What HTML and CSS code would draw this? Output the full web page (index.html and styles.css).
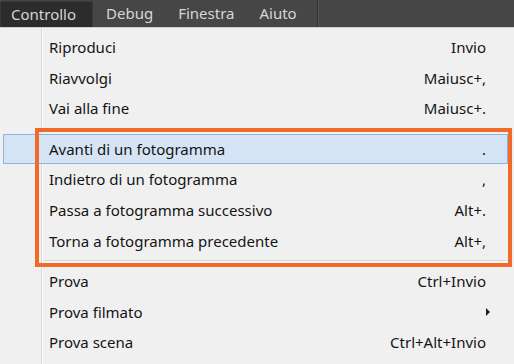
FILE: index.html
```html
<!DOCTYPE html>
<html>
<head>
    <meta charset="UTF-8">
    <title>Controllo</title>
    <link rel="stylesheet" href="styles.css">
</head>
<body>
    <div class="menubar">
        <div class="menubar-item active">Controllo</div>
        <div class="menubar-item">Debug</div>
        <div class="menubar-item">Finestra</div>
        <div class="menubar-item">Aiuto</div>
        <div class="menubar-divider"></div>
    </div>
    <div class="menu">
        <div class="menu-item"><span class="label">Riproduci</span><span class="shortcut">Invio</span></div>
        <div class="menu-item"><span class="label">Riavvolgi</span><span class="shortcut">Maiusc+,</span></div>
        <div class="menu-item"><span class="label">Vai alla fine</span><span class="shortcut">Maiusc+.</span></div>
        <div class="annotated">
            <div class="separator"></div>
            <div class="menu-item hover"><span class="label">Avanti di un fotogramma</span><span class="shortcut">.</span></div>
            <div class="menu-item"><span class="label">Indietro di un fotogramma</span><span class="shortcut">,</span></div>
            <div class="menu-item"><span class="label">Passa a fotogramma successivo</span><span class="shortcut">Alt+.</span></div>
            <div class="menu-item"><span class="label">Torna a fotogramma precedente</span><span class="shortcut">Alt+,</span></div>
            <div class="separator"></div>
        </div>
        <div class="menu-item"><span class="label">Prova</span><span class="shortcut">Ctrl+Invio</span></div>
        <div class="menu-item"><span class="label">Prova filmato</span><span class="shortcut"><span class="submenu-arrow"></span></span></div>
        <div class="menu-item"><span class="label">Prova scena</span><span class="shortcut">Ctrl+Alt+Invio</span></div>
    </div>
</body>
</html>
```

FILE: styles.css
```css
body {
    margin: 0;
    background-color: #f0f0f0;
    font-family: 'Noto Sans', 'Open Sans', sans-serif;
    overflow: hidden;
}

.menubar {
    display: flex;
    align-items: stretch;
    height: 27px;
    background-color: #464646;
    border-bottom: 1px solid #cdcdcd;
}

.menubar-item {
    display: flex;
    align-items: center;
    padding: 0 12px 2px 13px;
    color: #d6d6d6;
    font-size: 15px;
}

.menubar-item.active {
    margin-top: 1px;
    padding-left: 10px;
    padding-right: 12px;
    width: 69px;
    background-color: #2c2c2c;
    border: 1px solid #3a3a3a;
    border-bottom: none;
    border-radius: 2px 2px 0 0;
}

.menubar-divider {
    width: 1px;
    margin-left: 8px;
    background-color: #333;
    border-right: 1px solid #555;
}

.menu {
    padding-top: 4px;
    height: 336px;
    background-image: linear-gradient(to right, transparent 41px, #d7d7d7 41px, #d7d7d7 42px, #fafafa 42px, #fafafa 43px, transparent 43px);
}

.menu-item {
    display: flex;
    align-items: center;
    justify-content: space-between;
    height: 30.7px;
    margin: 0 6px 0 3px;
    padding: 0 21px 1px 45px;
    box-sizing: border-box;
    border: 1px solid transparent;
    font-size: 15px;
    color: #141414;
}

.menu-item.hover {
    background-color: #d5e4f4;
    border-color: #8cb5e8;
}

.shortcut {
    display: flex;
    align-items: center;
}

.submenu-arrow {
    width: 0;
    height: 0;
    margin-right: -9px;
    border-top: 4px solid transparent;
    border-bottom: 4px solid transparent;
    border-left: 4px solid #202020;
}

.separator {
    height: 9.6px;
    margin: 0 7px 0 44px;
    background-image: linear-gradient(to bottom, transparent 4px, #d5d5d5 4px, #d5d5d5 5px, #fbfbfb 5px, #fbfbfb 6px, transparent 6px);
}

.annotated {
    position: relative;
}

.annotated::after {
    content: "";
    position: absolute;
    top: 4px;
    bottom: -1px;
    left: 35px;
    right: 2px;
    border: 4px solid #f26a2a;
    pointer-events: none;
}
```
